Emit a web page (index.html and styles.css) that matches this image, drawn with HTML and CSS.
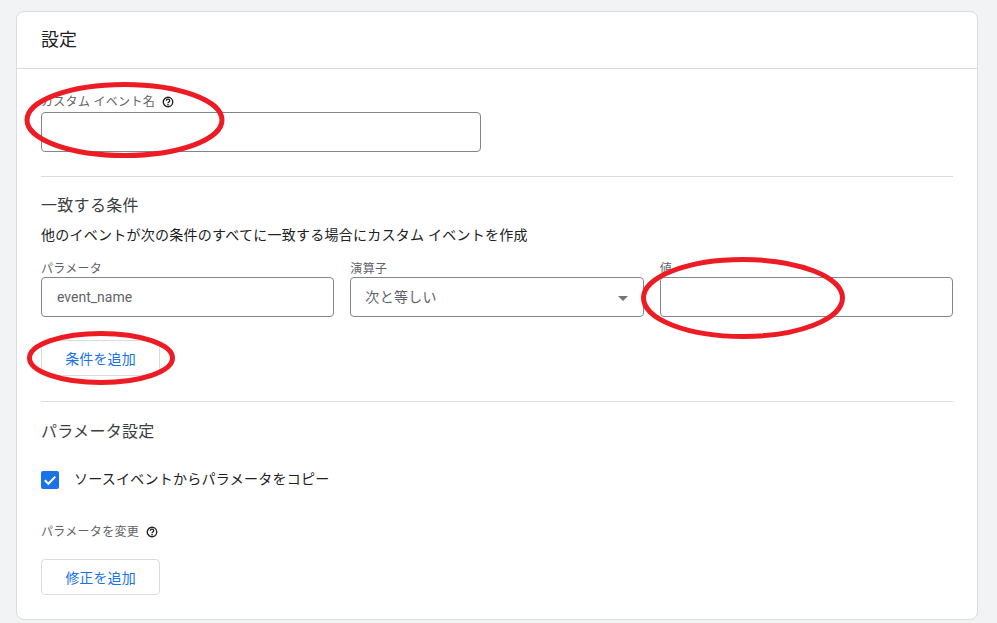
FILE: index.html
```html
<!DOCTYPE html>
<html lang="ja">
<head>
<meta charset="utf-8">
<title>設定</title>
<link rel="stylesheet" href="styles.css">
</head>
<body>
<section class="card">
  <header class="card-head"><h2 class="card-title">設定</h2></header>
  <div class="card-body">
    <div class="field name-field">
      <label class="label">カスタム イベント名
        <svg class="help" viewBox="0 0 24 24"><circle cx="12" cy="12" r="9.500" fill="none" stroke="#202124" stroke-width="2.800"/><path d="M8.600 9.600a3.400 3.400 0 0 1 6.800 0c0 2.400-3.200 2.400-3.400 5" fill="none" stroke="#202124" stroke-width="2.600"/><rect x="10.600" y="16" width="2.800" height="2.800" fill="#202124"/></svg>
      </label>
      <div class="box"></div>
    </div>
    <hr class="rule rule-a">
    <h3 class="section-title">一致する条件</h3>
    <p class="desc">他のイベントが次の条件のすべてに一致する場合にカスタム イベントを作成</p>
    <div class="cond-row">
      <div class="field"><label class="label cond-label">パラメータ</label><div class="box">event_name</div></div>
      <div class="field"><label class="label cond-label">演算子</label><div class="box select">次と等しい<span class="caret"></span></div></div>
      <div class="field"><label class="label cond-label">値</label><div class="box"></div></div>
    </div>
    <button class="btn btn-cond">条件を追加</button>
    <hr class="rule rule-b">
    <h3 class="section-title">パラメータ設定</h3>
    <div class="check-row">
      <span class="check"><svg viewBox="0 0 18 18"><path d="M3.800 9.200l3.600 3.600 6.900-7.200" fill="none" stroke="#fff" stroke-width="2"/></svg></span>
      <span class="check-text">ソースイベントからパラメータをコピー</span>
    </div>
    <div class="label mod-label">パラメータを変更
      <svg class="help" viewBox="0 0 24 24"><circle cx="12" cy="12" r="9.500" fill="none" stroke="#202124" stroke-width="2.800"/><path d="M8.600 9.600a3.400 3.400 0 0 1 6.800 0c0 2.400-3.200 2.400-3.400 5" fill="none" stroke="#202124" stroke-width="2.600"/><rect x="10.600" y="16" width="2.800" height="2.800" fill="#202124"/></svg>
    </div>
    <button class="btn">修正を追加</button>
  </div>
</section>
<svg class="marks" viewBox="0 0 997 623">
  <ellipse cx="124.500" cy="120" rx="97.500" ry="35.500"/>
  <ellipse cx="743" cy="298" rx="99.500" ry="38.500"/>
  <ellipse cx="101" cy="358" rx="71.500" ry="24.500"/>
</svg>
</body>
</html>
```
FILE: styles.css
```css
* { box-sizing: border-box; }
html, body { margin: 0; height: 623px; overflow: hidden; }
body {
  background: #f1f3f4;
  font-family: Roboto, "Noto Sans CJK JP", sans-serif;
  color: #202124;
  padding: 11px 19px 0 16px;
  position: relative;
}
.card {
  background: #fff;
  border: 1px solid #dadce0;
  border-radius: 8px;
  height: 609px;
  overflow: hidden;
}
.card-head {
  height: 57px;
  border-bottom: 1px solid #dadce0;
  padding: 0 24px;
  display: flex;
  align-items: center;
}
.card-title { margin: 0; font-size: 18px; font-weight: 400; line-height: 54px; color: #202124; }
.card-body { padding: 23px 24px 0 24px; }
.label {
  display: flex;
  align-items: center;
  gap: 7px;
  font-size: 12px;
  letter-spacing: .3px;
  line-height: 20px;
  height: 20px;
  color: #5f6368;
}
.cond-label { height: 16px; margin-top: 4px; align-items: flex-end; line-height: 16px; }
.help { width: 12px; height: 12px; }
.box {
  height: 40px;
  border: 1px solid #80868b;
  border-radius: 4px;
  padding: 0 15px;
  font-size: 14px;
  line-height: 38px;
  color: #5f6368;
  background: #fff;
  position: relative;
}
.name-field { width: 440px; }
.rule { border: 0; border-top: 1px solid #dadce0; margin: 0; }
.rule-a { margin-top: 24px; }
.section-title { margin: 18px 0 0; font-size: 16px; font-weight: 400; letter-spacing: .3px; line-height: 22px; color: #3c4043; }
.desc { margin: 8px 0 0; font-size: 14px; letter-spacing: .25px; line-height: 20px; color: #202124; }
.cond-row {
  display: grid;
  grid-template-columns: repeat(3, 1fr);
  gap: 16px;
  margin-top: 12px;
}
.select { padding-right: 40px; padding-left: 14px; letter-spacing: .3px; }
.caret {
  position: absolute;
  right: 15px;
  top: 18px;
  border-left: 5px solid transparent;
  border-right: 5px solid transparent;
  border-top: 5px solid #757575;
}
.btn {
  display: block;
  width: 119px;
  height: 36px;
  background: #fff;
  border: 1px solid #dadce0;
  border-radius: 4px;
  color: #1a73e8;
  font: inherit;
  font-size: 14px;
  letter-spacing: .1px;
  padding: 0;
}
.btn-cond { margin-top: 23px; }
.rule-b { margin-top: 25px; }
.rule-b + .section-title { margin-top: 19px; }
.check-row { display: flex; align-items: center; gap: 15px; margin-top: 25px; height: 20px; }
.check { width: 18px; height: 18px; background: #1a73e8; border-radius: 2px; display: block; flex: none; position: relative; top: 2px; }
.check svg { display: block; width: 18px; height: 18px; }
.check-text { font-size: 14px; letter-spacing: .25px; color: #202124; }
.mod-label { margin-top: 34px; }
.mod-label + .btn { margin-top: 17px; }
.marks { position: absolute; left: 0; top: 0; width: 997px; height: 623px; pointer-events: none; }
.marks ellipse { fill: none; stroke: #ed1c24; stroke-width: 5; }
```
